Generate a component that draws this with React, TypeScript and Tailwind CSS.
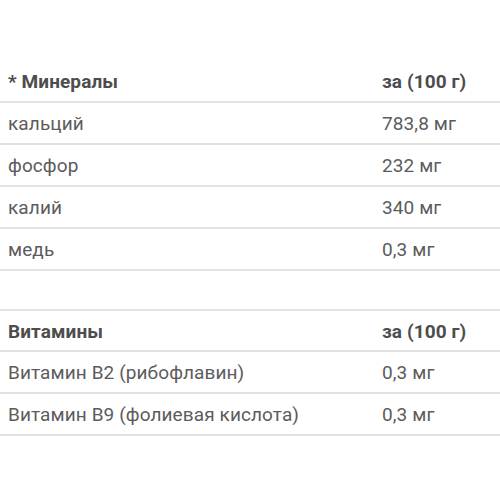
const minerals = [
  ['кальций', '783,8 мг'],
  ['фосфор', '232 мг'],
  ['калий', '340 мг'],
  ['медь', '0,3 мг'],
];

const vitamins = [
  ['Витамин B2 (рибофлавин)', '0,3 мг'],
  ['Витамин B9 (фолиевая кислота)', '0,3 мг'],
];

function NutrientTable({ title, rows, bordered }: { title: string; rows: string[][]; bordered?: boolean }) {
  return (
    <table className={`w-full border-collapse ${bordered ? 'border-t-2 border-[#e2e2e2]' : ''}`}>
      <thead>
        <tr className="h-[41px] border-b-2 border-[#e2e2e2]">
          <th className="w-[374px] px-2 pt-[3px] text-left font-bold text-[#4d4d4d]">{title}</th>
          <th className="px-2 pt-[3px] text-left font-bold text-[#4d4d4d]">за (100 г)</th>
        </tr>
      </thead>
      <tbody>
        {rows.map(([name, value]) => (
          <tr key={name} className="h-[42px] border-b-2 border-[#e2e2e2]">
            <td className="px-2 pt-[2px] text-[#5c5c5c]">{name}</td>
            <td className="px-2 pt-[2px] text-[#5c5c5c]">{value}</td>
          </tr>
        ))}
      </tbody>
    </table>
  );
}

export default function App() {
  return (
    <div className="w-[500px] h-[500px] bg-white pt-[61px] font-['Roboto',sans-serif] text-[19px] tracking-[0.1px]">
      <NutrientTable title="* Минералы" rows={minerals} />
      <div className="h-[38px]" />
      <NutrientTable title="Витамины" rows={vitamins} bordered />
    </div>
  );
}
